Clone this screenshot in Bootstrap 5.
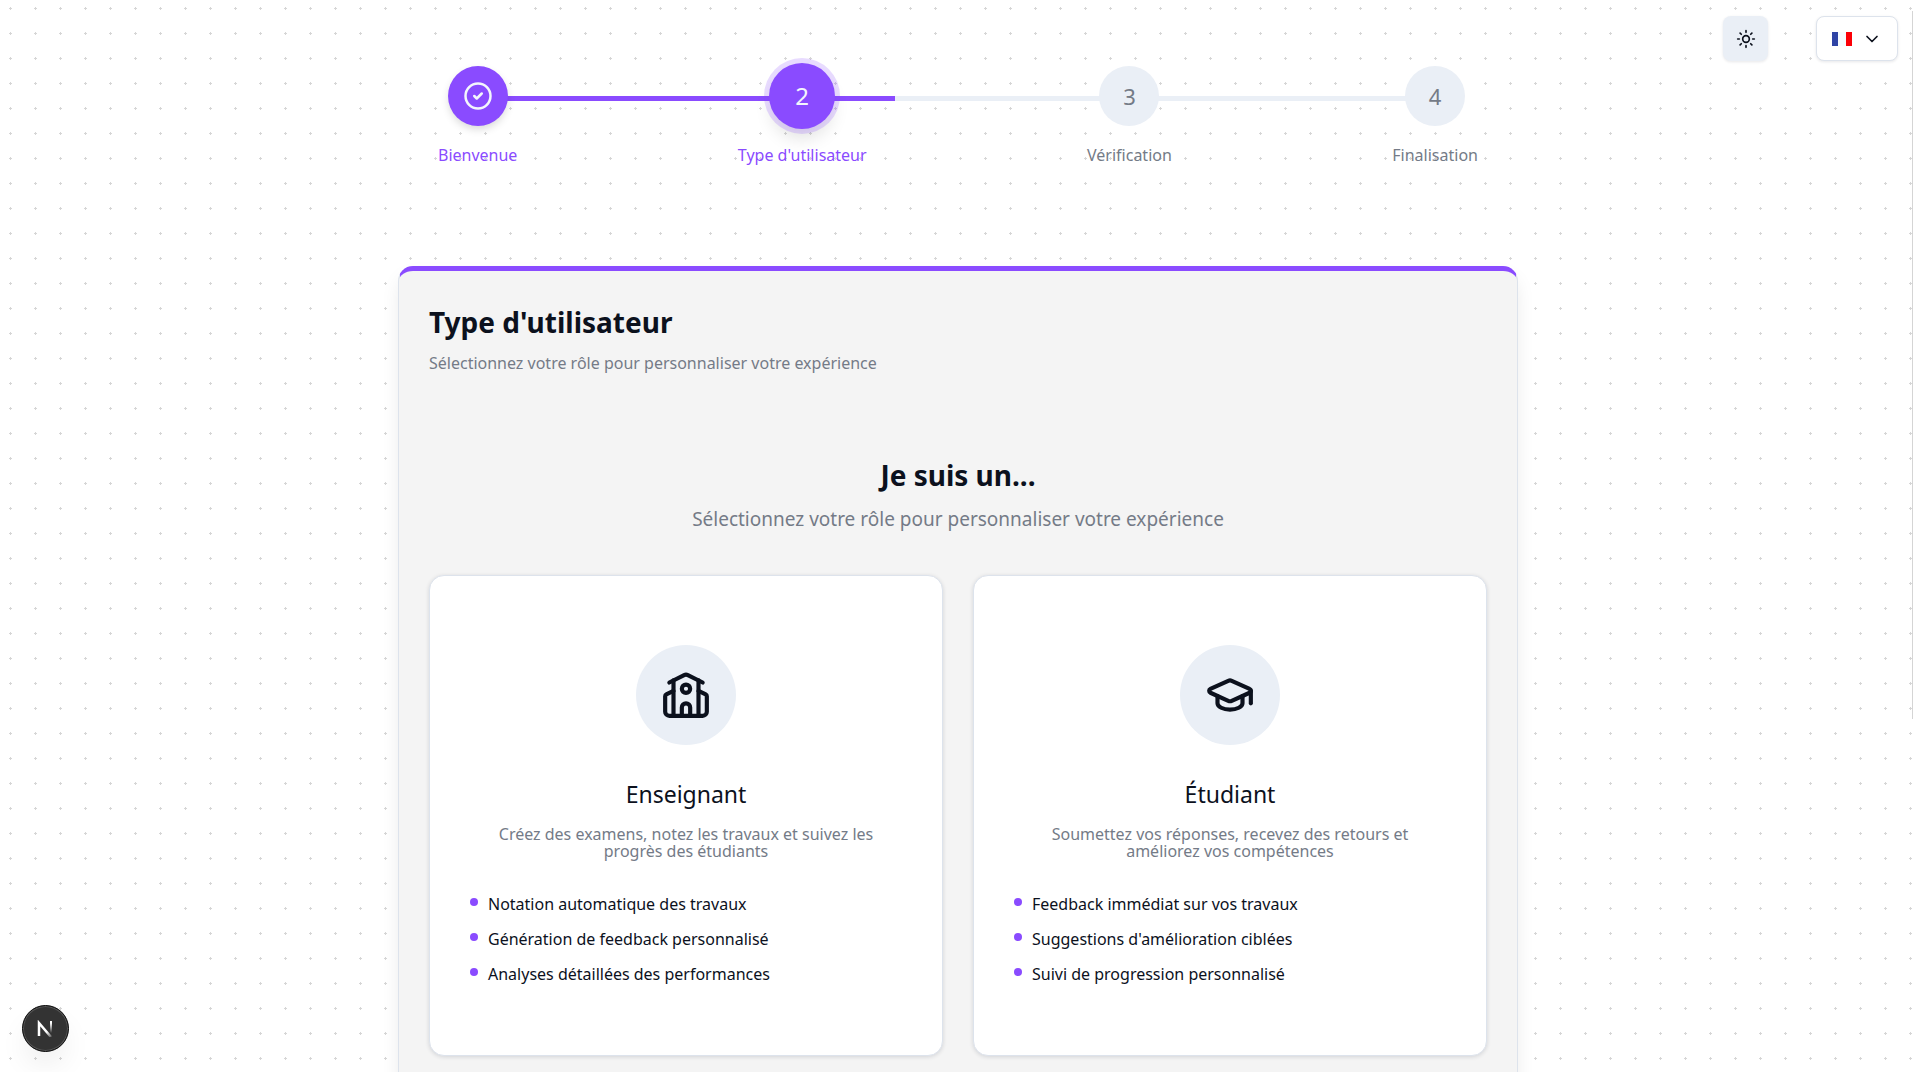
<!DOCTYPE html>
<html lang="fr">
<head>
<meta charset="utf-8">
<meta name="viewport" content="width=device-width, initial-scale=1">
<title>Type d'utilisateur</title>
<link rel="stylesheet" href="https://cdn.jsdelivr.net/npm/bootstrap@5.3.0/dist/css/bootstrap.min.css">
<style>
:root { --brand: #8a4bff; --ink: #0c111d; --muted: #747b87; --soft: #eaeff6; --line: #dde3ec; }
html { scrollbar-width: none; }
body {
  font-family: "Noto Sans", "Open Sans", sans-serif; font-size: 16px; line-height: 24px; color: var(--ink);
  background: radial-gradient(#d6d6d6 7%, transparent 8%) -2px -4px / 25px 25px #fff;
}
.ico { fill: none; stroke: currentColor; stroke-width: 2; stroke-linecap: round; stroke-linejoin: round; flex: none; }
.scroll-edge { top: 11px; right: 0; width: 1px; height: 66vh; background: #d5d5d5; }
.tools { top: 16px; right: 15px; gap: 48px; z-index: 5; }
.tool-btn { height: 45px; border-radius: 8px; color: var(--ink); box-shadow: 0 1px 3px rgba(16, 24, 40, .1); }
.theme-btn { width: 45px; padding: 0; background: var(--soft); border: 0; }
.lang-btn { width: 82px; padding: 0 15px; background: #fff; border: 1px solid var(--line); }
.shell { max-width: 1155px; padding: 66px 16px 40px 19px; }
.stepper { margin: 0 40px; }
.track { top: 30px; left: 40px; right: 40px; height: 5px; background: var(--soft); border-radius: 0; }
.track .progress-bar { background: var(--brand); }
.step { color: var(--muted); gap: 17px; }
.step-on { color: var(--brand); }
.dot { width: 60px; height: 60px; font-size: 22px; background: var(--soft); }
.step-on .dot { background: var(--brand); color: #f3f6fc; box-shadow: 0 4px 8px -1px rgba(0, 0, 0, .16); }
.step-on .dot-now { width: 66px; height: 66px; margin: -3px; font-size: 24px;
  box-shadow: 0 0 0 5px rgba(138, 75, 255, .2), 0 12px 18px -3px rgba(0, 0, 0, .12); }
.panel { margin-top: 99px; padding: 32px 30px 40px; background: #f4f4f4; border: 1px solid var(--line);
  border-top: 5px solid var(--brand); border-radius: 15px; box-shadow: 0 10px 20px -3px rgba(0, 0, 0, .1); }
.title { font-size: 28px; line-height: 38px; font-weight: 700; margin: 0; }
.muted-text { color: var(--muted); }
.panel-head { gap: 10px; margin-bottom: 81px; }
.ask { gap: 12px; margin-bottom: 43px; }
.ask-sub { font-size: 19px; line-height: 26px; }
.roles { --bs-gutter-x: 30px; --bs-gutter-y: 30px; }
.role { padding: 69px 40px 68px; border: 1px solid var(--line); border-radius: 15px; background: #fff;
  box-shadow: 0 1px 4px rgba(16, 24, 40, .14); color: inherit; text-decoration: none; }
.role-icon { width: 100px; height: 100px; background: var(--soft); margin-bottom: 34px; }
.role-name { font-size: 23px; line-height: 30px; font-weight: 400; margin: 0 0 17px; }
.role-desc { line-height: 17px; margin: 0 20px 32px; }
.perks { gap: 10px; line-height: 25px; }
.perks li { gap: 10px; }
.perks li::before { content: ""; width: 8px; height: 8px; margin-top: 6px; border-radius: 50%; background: var(--brand); flex: none; }
.dev-badge { left: 22px; bottom: 20px; width: 47px; height: 47px; padding: 0; border: 1px solid #0a0a0a; background: #333; color: #fff;
  box-shadow: inset 0 0 0 1px #555, 0 16px 32px -8px rgba(0, 0, 0, .12); }
</style>
<script src="https://cdn.jsdelivr.net/npm/bootstrap@5.3.0/dist/js/bootstrap.bundle.min.js" defer></script>
</head>
<body>
<div class="scroll-edge position-absolute"></div>
<header class="tools position-absolute d-flex">
  <button type="button" class="tool-btn theme-btn d-flex align-items-center justify-content-center" aria-label="Changer de thème">
    <svg class="ico" width="20" height="20" viewBox="0 0 24 24"><circle cx="12" cy="12" r="4"/><path d="M12 2v2M12 20v2M4.930 4.930l1.410 1.410M17.660 17.660l1.410 1.410M2 12h2M20 12h2M6.340 17.660l-1.410 1.410M19.070 4.930l-1.410 1.410"/></svg>
  </button>
  <button type="button" class="tool-btn lang-btn d-flex align-items-center justify-content-between" aria-label="Langue">
    <svg width="20" height="14" viewBox="0 0 20 14"><path fill="#2f44a5" d="M0 0h6v14H0z"/><path fill="#f6fbff" d="M6 0h8v14H6z"/><path fill="#fb0007" d="M14 0h6v14h-6z"/></svg>
    <svg class="ico" width="20" height="20" viewBox="0 0 24 24"><path d="m6 9 6 6 6-6"/></svg>
  </button>
</header>

<main class="shell mx-auto">
  <div class="stepper position-relative">
    <div class="track progress position-absolute" role="progressbar" aria-label="Progression" aria-valuenow="43" aria-valuemin="0" aria-valuemax="100">
      <div class="progress-bar" style="width: 43.4%"></div>
    </div>
    <ol class="list-unstyled d-flex justify-content-between position-relative mb-0">
      <li class="step step-on d-flex flex-column align-items-center">
        <span class="dot rounded-circle d-flex align-items-center justify-content-center">
          <svg class="ico" width="30" height="30" viewBox="0 0 24 24"><circle cx="12" cy="12" r="10"/><path d="m9 12 2 2 4-4"/></svg>
        </span>
        <span>Bienvenue</span>
      </li>
      <li class="step step-on d-flex flex-column align-items-center" aria-current="step">
        <span class="dot dot-now rounded-circle d-flex align-items-center justify-content-center">2</span>
        <span>Type d'utilisateur</span>
      </li>
      <li class="step d-flex flex-column align-items-center">
        <span class="dot rounded-circle d-flex align-items-center justify-content-center">3</span>
        <span>Vérification</span>
      </li>
      <li class="step d-flex flex-column align-items-center">
        <span class="dot rounded-circle d-flex align-items-center justify-content-center">4</span>
        <span>Finalisation</span>
      </li>
    </ol>
  </div>

  <section class="panel">
    <div class="panel-head d-flex flex-column">
      <h1 class="title">Type d'utilisateur</h1>
      <p class="muted-text mb-0">Sélectionnez votre rôle pour personnaliser votre expérience</p>
    </div>
    <div class="ask d-flex flex-column text-center">
      <h2 class="title">Je suis un...</h2>
      <p class="ask-sub muted-text mb-0">Sélectionnez votre rôle pour personnaliser votre expérience</p>
    </div>
    <div class="roles row row-cols-1 row-cols-md-2">
      <div class="col">
        <a href="#enseignant" class="role d-block h-100">
          <div class="role-icon rounded-circle mx-auto d-flex align-items-center justify-content-center">
            <svg class="ico" width="50" height="50" viewBox="0 0 24 24"><path d="M14 22v-4a2 2 0 1 0-4 0v4"/><path d="m18 10 3.447 1.724a1 1 0 0 1 .553.894V20a2 2 0 0 1-2 2H4a2 2 0 0 1-2-2v-7.382a1 1 0 0 1 .553-.894L6 10"/><path d="M18 5v17"/><path d="m4 6 7.106-3.553a2 2 0 0 1 1.788 0L20 6"/><path d="M6 5v17"/><circle cx="12" cy="9" r="2"/></svg>
          </div>
          <h3 class="role-name text-center">Enseignant</h3>
          <p class="role-desc muted-text text-center">Créez des examens, notez les travaux et suivez les progrès des étudiants</p>
          <ul class="perks list-unstyled d-flex flex-column mb-0">
            <li class="d-flex">Notation automatique des travaux</li>
            <li class="d-flex">Génération de feedback personnalisé</li>
            <li class="d-flex">Analyses détaillées des performances</li>
          </ul>
        </a>
      </div>
      <div class="col">
        <a href="#etudiant" class="role d-block h-100">
          <div class="role-icon rounded-circle mx-auto d-flex align-items-center justify-content-center">
            <svg class="ico" width="50" height="50" viewBox="0 0 24 24"><path d="M21.42 10.922a1 1 0 0 0-.019-1.838L12.83 5.18a2 2 0 0 0-1.66 0L2.6 9.08a1 1 0 0 0 0 1.832l8.57 3.908a2 2 0 0 0 1.66 0z"/><path d="M22 10v6"/><path d="M6 12.5V16a6 3 0 0 0 12 0v-3.5"/></svg>
          </div>
          <h3 class="role-name text-center">Étudiant</h3>
          <p class="role-desc muted-text text-center">Soumettez vos réponses, recevez des retours et améliorez vos compétences</p>
          <ul class="perks list-unstyled d-flex flex-column mb-0">
            <li class="d-flex">Feedback immédiat sur vos travaux</li>
            <li class="d-flex">Suggestions d'amélioration ciblées</li>
            <li class="d-flex">Suivi de progression personnalisé</li>
          </ul>
        </a>
      </div>
    </div>
  </section>
</main>

<button type="button" class="dev-badge position-fixed rounded-circle d-flex align-items-center justify-content-center" aria-label="Outils de développement">
  <svg width="17" height="17" viewBox="0 0 17 17" fill="none">
    <defs>
      <linearGradient id="fadeDiag" gradientUnits="userSpaceOnUse" x1="11" y1="11" x2="16" y2="18"><stop stop-color="#fff"/><stop offset="1" stop-color="#fff" stop-opacity="0"/></linearGradient>
      <linearGradient id="fadeBar" gradientUnits="userSpaceOnUse" x1="0" y1="3" x2="0" y2="13"><stop stop-color="#fff"/><stop offset="1" stop-color="#fff" stop-opacity="0"/></linearGradient>
    </defs>
    <path d="M2 16V3L14 17" stroke="url(#fadeDiag)" stroke-width="2.5"/>
    <path d="M14 1v12" stroke="url(#fadeBar)" stroke-width="2"/>
  </svg>
</button>
</body>
</html>
